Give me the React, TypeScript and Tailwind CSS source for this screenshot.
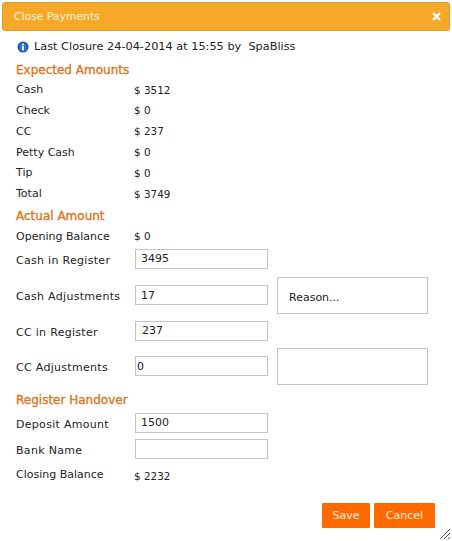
import React from 'react';

const font = { fontFamily: '"DejaVu Sans", Verdana, sans-serif' };

function Heading({ children, className = '' }: { children: React.ReactNode; className?: string }) {
  return <h2 className={`text-[12px] leading-[16px] font-normal text-[#de7420] [-webkit-text-stroke:0.35px_#de7420] ${className}`}>{children}</h2>;
}

function Row({ label, value, valueClass = '' }: { label: string; value: string; valueClass?: string }) {
  return (
    <div className="flex h-[20.8px] items-center">
      <span className="w-[118px] text-[11px] text-[#222]">{label}</span>
      <span className={`text-[10.4px] text-[#222] ${valueClass}`}>{value}</span>
    </div>
  );
}

function Field({ label, value, pl = 'pl-[5px]', className = '' }: { label: string; value: string; pl?: string; className?: string }) {
  return (
    <div className={`flex items-center ${className}`}>
      <span className="w-[119px] pt-[4px] text-[11px] leading-[16px] tracking-[0.3px] text-[#222]">{label}</span>
      <input
        readOnly
        value={value}
        className={`h-[20px] w-[133px] border border-[#c4c4c4] bg-white text-[11px] text-[#222] outline-none ${pl}`}
      />
    </div>
  );
}

function Note({ placeholder }: { placeholder?: string }) {
  return (
    <textarea
      readOnly
      placeholder={placeholder}
      className="ml-[9px] h-[37px] w-[151px] resize-none border border-[#c4c4c4] bg-white px-[11px] pt-[13px] text-[11px] leading-[13px] text-[#222] outline-none placeholder:text-[#222]"
    />
  );
}

export default function App() {
  return (
    <div className="relative h-[541px] w-[452px] overflow-hidden bg-white" style={font}>
      <div className="px-[2px] pt-[2px]">
        <div className="flex h-[29px] items-center justify-between rounded-[3px] border border-[#dd9a2a] bg-[#f6a828] pl-[11px] pr-[7px]">
          <span className="pt-[2px] text-[10.8px] text-[#fff3dc]">Close Payments</span>
          <svg width="9" height="9" viewBox="0 0 9 9" className="mr-[1px]">
            <path d="M1 1 L8 8 M8 1 L1 8" stroke="#fff" strokeWidth="2.4" />
          </svg>
        </div>
      </div>

      <div className="px-[16px]">
        <div className="mt-[8px] flex h-[16px] items-center gap-[5px] pl-[1px]">
          <svg width="12" height="12" viewBox="0 0 12 12">
            <circle cx="6" cy="6" r="5.5" fill="#1a4fae" />
            <circle cx="6" cy="6" r="4.2" fill="#2a74d8" />
            <rect x="5" y="5" width="2" height="4.4" fill="#fff" />
            <rect x="5" y="2.6" width="2" height="1.6" fill="#fff" />
          </svg>
          <span className="text-[11.3px] text-[#222]">Last Closure 24-04-2014 at 15:55 by&nbsp; SpaBliss</span>
        </div>

        <Heading className="mt-[7px]">Expected Amounts</Heading>
        <div className="mt-[2px]">
          <Row label="Cash" value="$ 3512" />
          <Row label="Check" value="$ 0" />
          <Row label="CC" value="$ 237" />
          <Row label="Petty Cash" value="$ 0" />
          <Row label="Tip" value="$ 0" />
          <Row label="Total" value="$ 3749" />
        </div>

        <Heading className="mt-[3px]">Actual Amount</Heading>
        <div className="mt-[3px]">
          <Row label="Opening Balance" value="$ 0" />
        </div>
        <Field label="Cash in Register" value="3495" className="mt-[1px]" />
        <div className="mt-[8px] flex items-center">
          <Field label="Cash Adjustments" value="17" />
          <Note placeholder="Reason..." />
        </div>
        <Field label="CC in Register" value="237" pl="pl-[6px]" className="mt-[7px]" />
        <div className="mt-[7px] flex items-center">
          <Field label="CC Adjustments" value="0" pl="pl-[1px]" />
          <Note />
        </div>

        <Heading className="mt-[7px]">Register Handover</Heading>
        <Field label="Deposit Amount" value="1500" className="mt-[5px]" />
        <Field label="Bank Name" value="" className="mt-[6px]" />
        <div className="mt-[6px]">
          <Row label="Closing Balance" value="$ 2232" valueClass="pt-[3px]" />
        </div>
      </div>

      <div className="mt-[18px] flex justify-end gap-[4px] pr-[17px]">
        <button className="h-[25px] w-[48px] rounded-[1px] bg-[#ff6a00] text-[11px] text-[#fff0e4]">Save</button>
        <button className="h-[25px] w-[61px] rounded-[1px] bg-[#ff6a00] text-[11px] text-[#fff0e4]">Cancel</button>
      </div>

      <svg width="12" height="12" viewBox="0 0 12 12" className="absolute bottom-[1px] right-[1px]">
        <path d="M1 11 L11 1 M5 11 L11 5 M9 11 L11 9" stroke="#555" strokeWidth="1" />
      </svg>
    </div>
  );
}
